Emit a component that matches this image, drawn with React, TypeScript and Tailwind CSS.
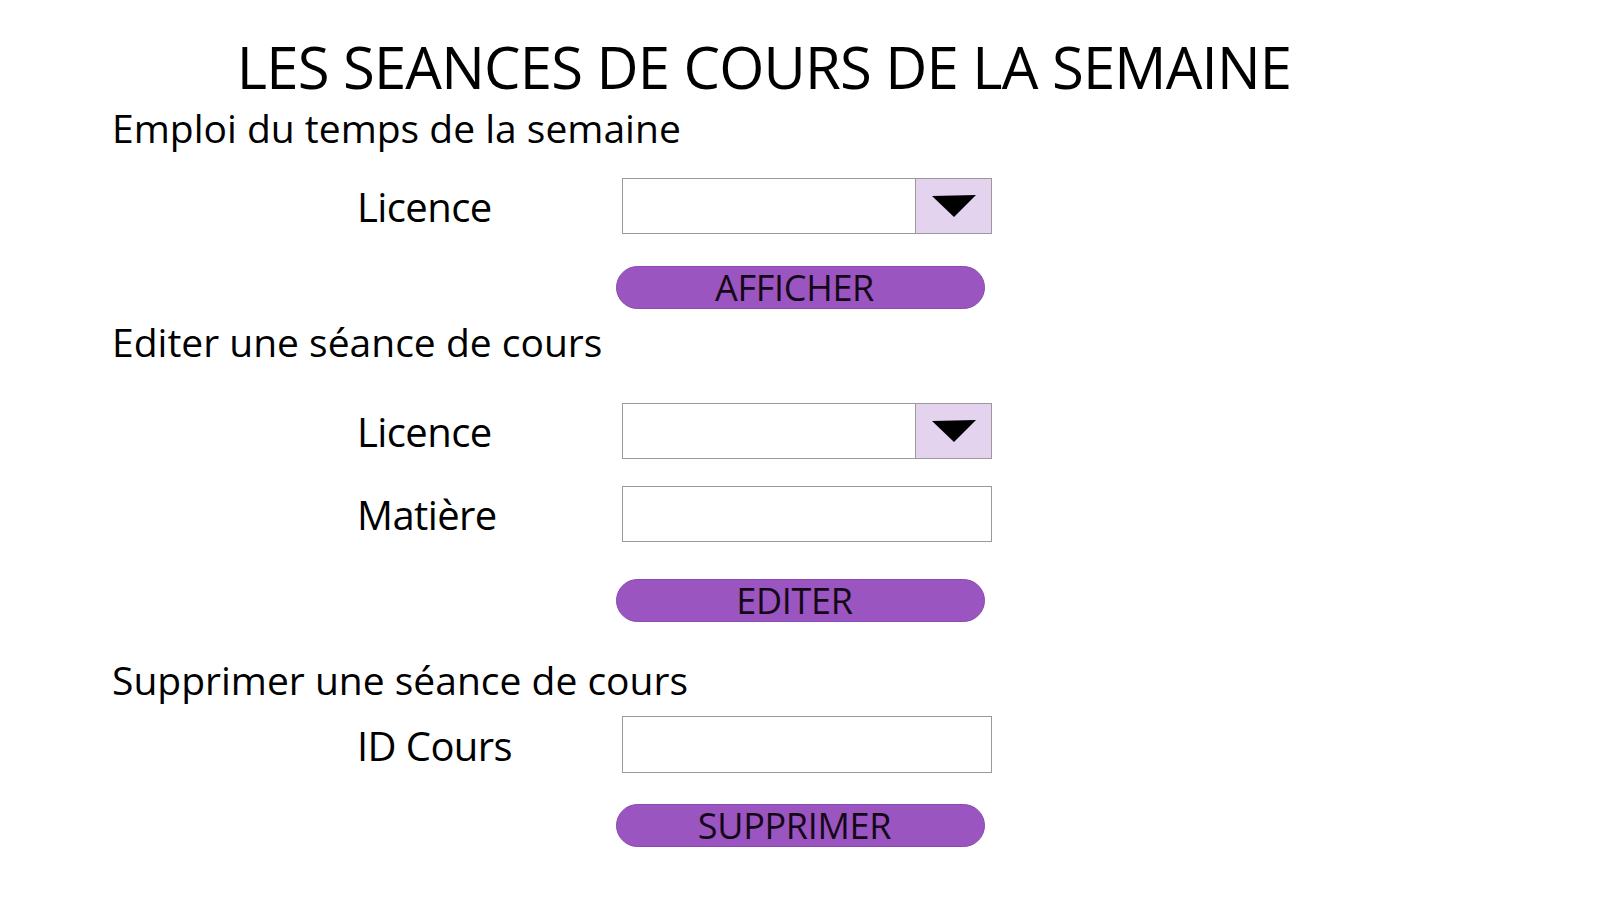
import React from "react";

const font = { fontFamily: '"Open Sans", "Noto Sans", sans-serif' };

function Caret() {
  return (
    <svg width="46" height="24" viewBox="0 0 46 24">
      <polygon points="1,2 45,1 23,23" fill="#000" />
    </svg>
  );
}

function SelectBox() {
  return (
    <div className="flex h-[56px] w-[370px] border border-[#9a9a9a] bg-white">
      <div className="flex-1" />
      <div className="flex w-[76px] items-center justify-center border-l border-[#9a9a9a] bg-[#e3d3ee]">
        <Caret />
      </div>
    </div>
  );
}

function TextBox({ tall = false }: { tall?: boolean }) {
  return <div className={`${tall ? "h-[57px]" : "h-[56px]"} w-[370px] border border-[#9a9a9a] bg-white`} />;
}

function Row({ label, children, className = "" }: { label: string; children: React.ReactNode; className?: string }) {
  return (
    <div className={`flex items-center pl-[245px] ${className}`}>
      <span className="w-[265px] pt-[2px] text-[40px] leading-none tracking-[-0.6px] text-black">{label}</span>
      {children}
    </div>
  );
}

function PillButton({ label, className = "" }: { label: string; className?: string }) {
  return (
    <div className={`pl-[504px] ${className}`}>
      <button className="flex h-[43px] w-[369px] items-center justify-center rounded-full border border-[#8a48b0] bg-[#9b55c0] pr-[12px] text-[36px] leading-none tracking-[-0.3px] text-[#140818]">
        {label}
      </button>
    </div>
  );
}

function Heading({ children, className = "" }: { children: React.ReactNode; className?: string }) {
  return (
    <h2 className={`h-[38px] text-[39px] leading-[38px] text-black ${className}`}>{children}</h2>
  );
}

export default function App() {
  return (
    <div style={font} className="h-[900px] w-[1600px] overflow-hidden bg-white pt-[38px]">
      <h1 className="h-[58px] w-[1528px] text-center text-[58px] leading-none tracking-[-0.8px] text-black">
        LES SEANCES DE COURS DE LA SEMAINE
      </h1>
      <div className="pl-[112px]">
        <Heading className="mt-[13px]">Emploi du temps de la semaine</Heading>
        <Row label="Licence" className="mt-[31px]">
          <SelectBox />
        </Row>
        <PillButton label="AFFICHER" className="mt-[32px]" />

        <Heading className="mt-[14px]">Editer une séance de cours</Heading>
        <Row label="Licence" className="mt-[42px]">
          <SelectBox />
        </Row>
        <Row label="Matière" className="mt-[27px]">
          <TextBox />
        </Row>
        <PillButton label="EDITER" className="mt-[37px]" />

        <Heading className="mt-[39px]">Supprimer une séance de cours</Heading>
        <Row label="ID Cours" className="mt-[17px]">
          <TextBox tall />
        </Row>
        <PillButton label="SUPPRIMER" className="mt-[31px]" />
      </div>
    </div>
  );
}
